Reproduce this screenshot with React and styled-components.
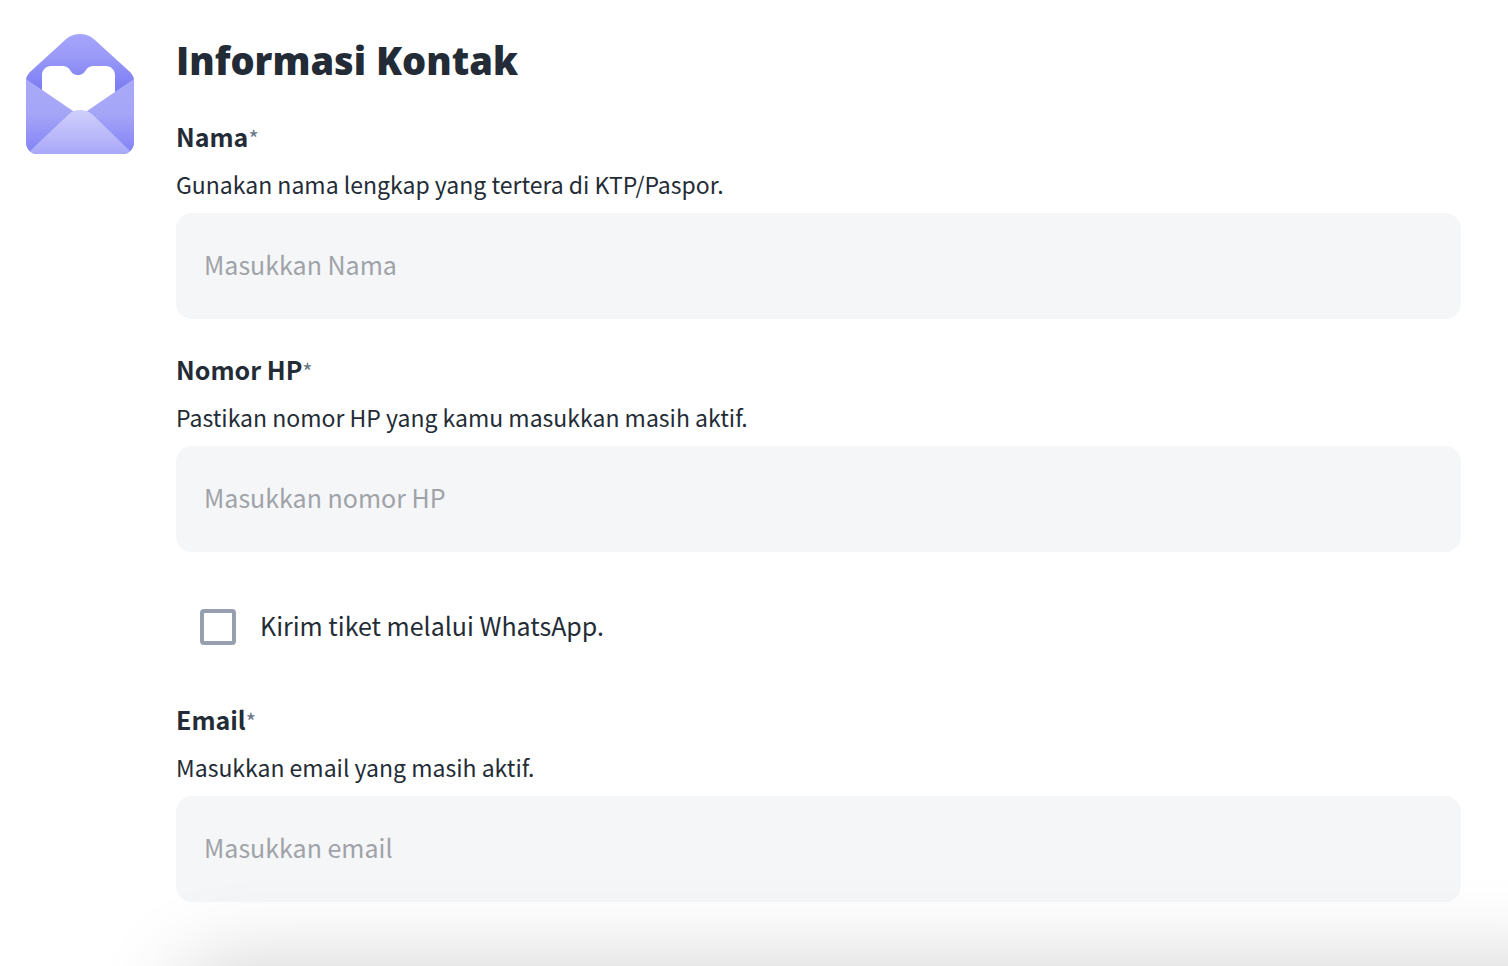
import styled, { createGlobalStyle } from "styled-components";

const fields = {
  name: {
    id: "name",
    label: "Nama",
    hint: "Gunakan nama lengkap yang tertera di KTP/Paspor.",
    placeholder: "Masukkan Nama",
    type: "text",
  },
  phone: {
    id: "phone",
    label: "Nomor HP",
    hint: "Pastikan nomor HP yang kamu masukkan masih aktif.",
    placeholder: "Masukkan nomor HP",
    type: "tel",
  },
  email: {
    id: "email",
    label: "Email",
    hint: "Masukkan email yang masih aktif.",
    placeholder: "Masukkan email",
    type: "email",
  },
};

function EnvelopeIcon() {
  return (
    <Icon viewBox="0 0 108 120" aria-hidden="true">
      <defs>
        <linearGradient id="flap" x1="0" y1="0" x2="0" y2="1">
          <stop offset="0" stopColor="#a5a5fb" />
          <stop offset="0.25" stopColor="#9c9cf9" />
          <stop offset="0.65" stopColor="#7f7ff4" />
          <stop offset="1" stopColor="#7f7ff4" />
        </linearGradient>
        <linearGradient id="side" x1="0" y1="45" x2="0" y2="120" gradientUnits="userSpaceOnUse">
          <stop offset="0" stopColor="#a9a9f9" />
          <stop offset="0.45" stopColor="#a6a6f8" />
          <stop offset="1" stopColor="#8282f5" />
        </linearGradient>
        <linearGradient id="front" x1="0" y1="0" x2="0" y2="1">
          <stop offset="0" stopColor="#d0d0fc" />
          <stop offset="1" stopColor="#a9a8f9" />
        </linearGradient>
      </defs>
      <path
        fill="url(#flap)"
        d="M0 46C0 43 2 40 4 38L38 7C42 3 47 0 54 0C61 0 66 3 70 7L104 38C106 40 108 43 108 46L60 80H48Z"
      />
      <path
        fill="#fff"
        d="M16 41C16 36 20 32 25 32H36C46 32 43 41 52 41C61 41 58 32 68 32H80C85 32 89 36 89 41V66L62 84H46L16 66Z"
      />
      <path
        fill="url(#side)"
        d="M0 45L47 77H61L108 45V109C108 115 103 120 97 120H11C5 120 0 115 0 109Z"
      />
      <path
        fill="url(#front)"
        d="M4 117L41 82C45 78 48 76 54 76C60 76 64 78 68 82L104 117C102 119 100 120 97 120H11C8 120 6 119 4 117Z"
      />
    </Icon>
  );
}

function Field({ id, label, hint, placeholder, type }) {
  return (
    <FieldWrapper>
      <Label htmlFor={id}>
        {label}
        <Required>*</Required>
      </Label>
      <Hint id={`${id}-hint`}>{hint}</Hint>
      <Input id={id} name={id} type={type} placeholder={placeholder} aria-describedby={`${id}-hint`} />
    </FieldWrapper>
  );
}

function App() {
  return (
    <>
      <GlobalStyle />
      <Wrapper>
        <EnvelopeIcon />
        <Content>
          <Title>Informasi Kontak</Title>
          <Form>
            <Field {...fields.name} />
            <Field {...fields.phone} />
            <CheckRow htmlFor="whatsapp">
              <Checkbox id="whatsapp" type="checkbox" />
              <CheckText>Kirim tiket melalui WhatsApp.</CheckText>
            </CheckRow>
            <Field {...fields.email} />
          </Form>
        </Content>
      </Wrapper>
      <BottomShadow />
    </>
  );
}

export default App;

const GlobalStyle = createGlobalStyle`
  * {
    box-sizing: border-box;
  }
  body {
    margin: 0;
    background: #fff;
    color: #232c36;
    font-family: "Noto Sans CJK JP", "Noto Sans", sans-serif;
    font-size: 25px;
    overflow-x: hidden;
  }
`;

const Wrapper = styled.main`
  display: flex;
  align-items: flex-start;
  gap: 42px;
  padding: 34px 47px 47px 26px;
`;

const Icon = styled.svg`
  flex: none;
  width: 108px;
  height: 120px;
`;

const Content = styled.section`
  flex: 1;
  min-width: 0;
`;

const Title = styled.h1`
  margin: 0 0 31px;
  font-family: "Open Sans", sans-serif;
  font-size: 38px;
  font-weight: 800;
  line-height: 52px;
`;

const Form = styled.form`
  display: flex;
  flex-direction: column;
  gap: 31px;
`;

const FieldWrapper = styled.div`
  display: flex;
  flex-direction: column;
  gap: 8px;
`;

const Label = styled.label`
  font-weight: 700;
  line-height: 38px;
`;

const Required = styled.span`
  color: #687687;
  font-size: 22px;
  font-weight: 400;
  line-height: 1;
`;

const Hint = styled.p`
  margin: 0;
  font-size: 23px;
  line-height: 42px;
`;

const Input = styled.input`
  width: 100%;
  height: 106px;
  padding: 0 28px 4px;
  border: 0;
  border-radius: 16px;
  background: #f5f6f8;
  color: inherit;
  font: inherit;
  &::placeholder {
    color: #9fa3a8;
    opacity: 1;
  }
`;

const CheckRow = styled.label`
  display: flex;
  align-items: center;
  gap: 24px;
  padding: 26px 24px 24px;
  line-height: 32px;
`;

const CheckText = styled.span`
  padding-bottom: 4px;
`;

const Checkbox = styled.input`
  appearance: none;
  flex: none;
  width: 36px;
  height: 36px;
  margin: 0;
  border: 4px solid #959fad;
  border-radius: 4px;
  background: #fff;
  &:checked {
    background: #959fad;
  }
`;

/* shadow cast by the sheet that starts right under the viewport */
const BottomShadow = styled.div`
  position: fixed;
  top: 100%;
  left: 180px;
  right: -100px;
  height: 160px;
  border-radius: 40px;
  box-shadow: 0 0 88px rgba(0, 0, 0, 0.19);
  pointer-events: none;
`;
